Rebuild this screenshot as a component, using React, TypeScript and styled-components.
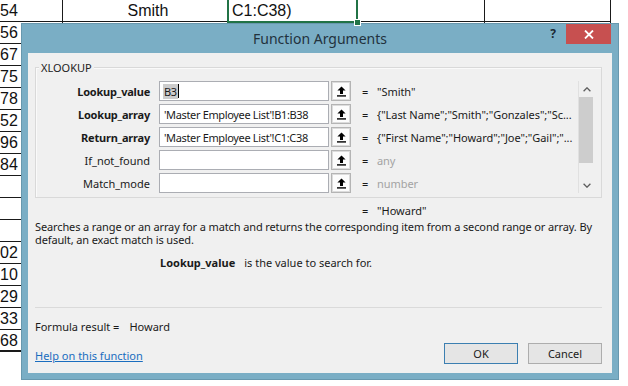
import styled, { createGlobalStyle } from 'styled-components';

type Arg = {
  label: string;
  value: string;
  result: string;
  required: boolean;
  muted?: boolean;
};

const sheetNumbers = ['54', '56', '67', '75', '78', '52', '96', '84', '', '', '', '02', '10', '29', '33', '68'];

const args: Arg[] = [
  { label: 'Lookup_value', value: 'B3', result: '"Smith"', required: true },
  { label: 'Lookup_array', value: "'Master Employee List'!B1:B38", result: '{"Last Name";"Smith";"Gonzales";"Sc...', required: true },
  { label: 'Return_array', value: "'Master Employee List'!C1:C38", result: '{"First Name";"Howard";"Joe";"Gail";"...', required: true },
  { label: 'If_not_found', value: '', result: 'any', required: false, muted: true },
  { label: 'Match_mode', value: '', result: 'number', required: false, muted: true },
];

const RefIcon = () => (
  <svg width="9" height="11" viewBox="0 0 9 11">
    <path d="M4.5 0.5 L8.6 4.6 H6 V8 H3 V4.6 H0.4 Z" fill="#000" />
    <rect x="0" y="9.2" width="9" height="1.4" fill="#000" />
  </svg>
);

const Chevron = ({ down }: { down?: boolean }) => (
  <svg width="8" height="5" viewBox="0 0 8 5">
    <path d={down ? 'M0.6 0.8 L4 4.2 L7.4 0.8' : 'M0.6 4.2 L4 0.8 L7.4 4.2'} stroke="#5e5e5e" strokeWidth="1.3" fill="none" />
  </svg>
);

const App = () => {
  return (
    <Page>
      <GlobalStyle />
      <Sheet>
        {sheetNumbers.map((num, idx) => (
          <SheetRow key={idx} $last={idx === sheetNumbers.length - 1}>
            <NumCell>{num}</NumCell>
            <Cell $align="center">{idx === 0 ? 'Smith' : ''}</Cell>
            {idx === 0 ? <SelectedCell>C1:C38)</SelectedCell> : <Cell />}
            <Cell />
            <Cell />
          </SheetRow>
        ))}
      </Sheet>

      <Dialog>
        <TitleBar>
          <Title>Function Arguments</Title>
          <TitleControls>
            <HelpGlyph>?</HelpGlyph>
            <CloseButton>
              <svg width="10" height="9" viewBox="0 0 10 9">
                <path d="M1 0.5 L9 8.5 M9 0.5 L1 8.5" stroke="#fff" strokeWidth="1.8" />
              </svg>
            </CloseButton>
          </TitleControls>
        </TitleBar>

        <Client>
          <GroupBox>
            <Legend>XLOOKUP</Legend>
            <GroupInner>
              <ArgList>
                {args.map((arg, idx) => (
                  <ArgRow key={arg.label}>
                    <ArgLabel $required={arg.required}>{arg.label}</ArgLabel>
                    <ArgInput>
                      {idx === 0 ? (
                        <>
                          <Selection>{arg.value}</Selection>
                          <Caret />
                        </>
                      ) : (
                        arg.value
                      )}
                    </ArgInput>
                    <RefButton>
                      <RefIcon />
                    </RefButton>
                    <Equals>=</Equals>
                    <ArgValue $muted={arg.muted}>{arg.result}</ArgValue>
                  </ArgRow>
                ))}
              </ArgList>
              <Scrollbar>
                <ScrollArrow>
                  <Chevron />
                </ScrollArrow>
                <ScrollThumb />
                <ScrollTrack />
                <ScrollArrow>
                  <Chevron down />
                </ScrollArrow>
              </Scrollbar>
            </GroupInner>
          </GroupBox>

          <ResultLine>
            <Equals>=</Equals>
            <span>"Howard"</span>
          </ResultLine>

          <Description>
            Searches a range or an array for a match and returns the corresponding item from a second range or array. By
            default, an exact match is used.
          </Description>

          <ArgHelp>
            <strong>Lookup_value</strong>
            <span>is the value to search for.</span>
          </ArgHelp>

          <Divider />

          <FormulaResult>
            <span>Formula result =</span>
            <ResultValue>Howard</ResultValue>
          </FormulaResult>

          <Footer>
            <HelpLink>Help on this function</HelpLink>
            <DialogButton $primary>OK</DialogButton>
            <DialogButton>Cancel</DialogButton>
          </Footer>
        </Client>
      </Dialog>
    </Page>
  );
};

const GlobalStyle = createGlobalStyle`
  html, body {
    margin: 0;
    padding: 0;
    background: #fff;
  }
`;

const Page = styled.div`
  position: relative;
  width: 628px;
  height: 386px;
  overflow: hidden;
  background: #fff;
`;

const Sheet = styled.div`
  display: flex;
  flex-direction: column;
  width: 611px;
  font-family: 'Liberation Sans', Arial, sans-serif;
  font-size: 16px;
  color: #111;
`;

const SheetRow = styled.div<{ $last?: boolean }>`
  display: grid;
  grid-template-columns: 63px 166px 129px 127px 126px;
  height: 22px;
  box-sizing: border-box;
  border-bottom: ${(p) => (p.$last ? '2px' : '1px')} solid #1a1a1a;
`;

const Cell = styled.div<{ $align?: string }>`
  border-right: 1px solid #1a1a1a;
  line-height: 22px;
  text-align: ${(p) => p.$align ?? 'left'};
  padding-left: ${(p) => (p.$align === 'center' ? '5px' : '0')};
  white-space: nowrap;
`;

const NumCell = styled(Cell)`
  text-align: right;
  padding-right: 46px;
`;

const SelectedCell = styled(Cell)`
  position: relative;
  padding-left: 3px;

  &::after {
    content: '';
    position: absolute;
    left: -2px;
    right: -1px;
    top: -2px;
    bottom: -1px;
    border: 2px solid #217346;
    border-top: none;
  }

  &::before {
    content: '';
    position: absolute;
    right: -4px;
    bottom: -4px;
    width: 5px;
    height: 5px;
    background: #217346;
    border: 1px solid #fff;
    z-index: 1;
  }
`;

const Dialog = styled.div`
  position: absolute;
  left: 21px;
  top: 23px;
  width: 598px;
  height: 357px;
  box-sizing: border-box;
  display: flex;
  flex-direction: column;
  background: #7aaec5;
  border: 1px solid #6898ae;
  font-family: 'Noto Sans', 'Open Sans', sans-serif;
  font-size: 11px;
  color: #1a1a1a;
`;

const TitleBar = styled.div`
  display: grid;
  grid-template-columns: 1fr auto 1fr;
  align-items: start;
  height: 29px;
`;

const Title = styled.div`
  grid-column: 2;
  font-size: 14px;
  line-height: 29px;
  color: #22323d;
`;

const TitleControls = styled.div`
  grid-column: 3;
  justify-self: end;
  display: flex;
  align-items: flex-start;
  padding-right: 7px;
`;

const HelpGlyph = styled.span`
  margin-top: 3px;
  margin-right: 10px;
  font-size: 12px;
  font-weight: bold;
  line-height: 14px;
  color: #1c2a34;
`;

const CloseButton = styled.div`
  width: 45px;
  height: 20px;
  display: flex;
  align-items: center;
  justify-content: center;
  background: #c75050;
`;

const Client = styled.div`
  flex: 1;
  display: flex;
  flex-direction: column;
  margin: 0 6px 6px;
  padding: 0 10px 0 7px;
  background: #f0f0f0;
`;

const GroupBox = styled.div`
  position: relative;
  margin-top: 14px;
  height: 131px;
  box-sizing: border-box;
  padding: 13px 7px 4px 0;
  border: 1px solid #d9d9d9;
  box-shadow: inset 1px 1px 0 #fafafa;
`;

const Legend = styled.span`
  position: absolute;
  top: -8px;
  left: 3px;
  padding: 0 2px;
  line-height: 15px;
  background: #f0f0f0;
  color: #222;
`;

const GroupInner = styled.div`
  display: flex;
`;

const ArgList = styled.div`
  flex: 1;
  display: flex;
  flex-direction: column;
  gap: 3px;
`;

const ArgRow = styled.div`
  display: flex;
  align-items: center;
  height: 20px;
`;

const ArgLabel = styled.span<{ $required: boolean }>`
  width: 114px;
  margin-right: 9px;
  text-align: right;
  font-weight: ${(p) => (p.$required ? 'bold' : 'normal')};
  letter-spacing: ${(p) => (p.$required ? '-0.2px' : '0')};
`;

const ArgInput = styled.div`
  display: flex;
  align-items: center;
  width: 170px;
  height: 20px;
  box-sizing: border-box;
  padding-left: 4px;
  border: 1px solid #abadb3;
  background: #fff;
  white-space: nowrap;
  overflow: hidden;
  letter-spacing: -0.35px;
`;

const Selection = styled.span`
  margin-left: -1px;
  padding: 0 1px;
  background: #cccccc;
  line-height: 15px;
`;

const Caret = styled.span`
  width: 1px;
  height: 14px;
  background: #000;
`;

const RefButton = styled.div`
  display: flex;
  align-items: center;
  justify-content: center;
  width: 20px;
  height: 20px;
  box-sizing: border-box;
  margin-left: 2px;
  border: 1px solid #b4b4b4;
  box-shadow: inset 0 0 0 1px #dcdcdc;
  background: #fcfcfc;
`;

const Equals = styled.span`
  width: 15px;
  margin-left: 11px;
`;

const ArgValue = styled.span<{ $muted?: boolean }>`
  white-space: nowrap;
  letter-spacing: -0.05px;
  color: ${(p) => (p.$muted ? '#a3a3a3' : '#1a1a1a')};
`;

const Scrollbar = styled.div`
  display: flex;
  flex-direction: column;
  width: 16px;
  box-sizing: border-box;
  border-left: 1px solid #e0e0e0;
`;

const ScrollArrow = styled.div`
  display: flex;
  align-items: center;
  justify-content: center;
  height: 16px;
`;

const ScrollThumb = styled.div`
  height: 66px;
  margin-right: 1px;
  background: #cdcdcd;
`;

const ScrollTrack = styled.div`
  flex: 1;
`;

const ResultLine = styled.div`
  display: flex;
  margin-top: 6px;
  padding-left: 316px;
  line-height: 13px;
`;

const Description = styled.div`
  margin-top: 3px;
  margin-right: -6px;
  line-height: 13px;
  letter-spacing: -0.12px;
`;

const ArgHelp = styled.div`
  display: flex;
  gap: 9px;
  margin-top: 10px;
  padding-left: 125px;
  line-height: 13px;
`;

const Divider = styled.div`
  height: 1px;
  margin-top: 38px;
  background: #dadada;
`;

const FormulaResult = styled.div`
  display: flex;
  margin-top: 12px;
  line-height: 13px;
`;

const ResultValue = styled.span`
  margin-left: 10px;
`;

const Footer = styled.div`
  display: flex;
  align-items: center;
  gap: 10px;
  margin-top: 10px;
`;

const HelpLink = styled.a`
  flex: 1;
  color: #1a6dbf;
  text-decoration: underline;
  line-height: 13px;
  padding-top: 3px;
`;

const DialogButton = styled.div<{ $primary?: boolean }>`
  width: 74px;
  height: 21px;
  box-sizing: border-box;
  display: flex;
  align-items: center;
  justify-content: center;
  border: 1px solid ${(p) => (p.$primary ? '#3c7fb1' : '#adadad')};
  background: #e5e5e5;
  color: #1a1a1a;
`;

export default App;
